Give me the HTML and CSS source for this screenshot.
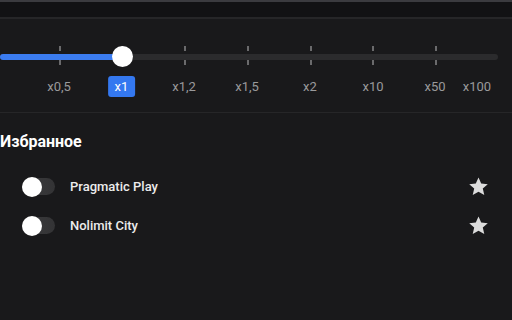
FILE: index.html
```html
<!DOCTYPE html>
<html lang="ru">
<head>
<meta charset="utf-8">
<link rel="stylesheet" href="styles.css">
</head>
<body>
<div class="topbar"></div>
<section class="speed">
  <div class="slider">
    <div class="track"><div class="fill"></div></div>
    <span class="tick" style="left:60px"></span>
    <span class="tick" style="left:122px"></span>
    <span class="tick" style="left:185px"></span>
    <span class="tick" style="left:248px"></span>
    <span class="tick" style="left:311px"></span>
    <span class="tick" style="left:373px"></span>
    <span class="tick" style="left:436px"></span>
    <div class="thumb"></div>
  </div>
  <div class="labels">
    <span class="lbl" style="left:59px">x0,5</span>
    <span class="lbl active" style="left:121.5px">x1</span>
    <span class="lbl" style="left:184px">x1,2</span>
    <span class="lbl" style="left:247px">x1,5</span>
    <span class="lbl" style="left:310px">x2</span>
    <span class="lbl" style="left:373px">x10</span>
    <span class="lbl" style="left:435px">x50</span>
    <span class="lbl" style="left:477px">x100</span>
  </div>
</section>
<section class="fav">
  <h2 class="title">Избранное</h2>
  <ul class="list">
    <li class="row">
      <span class="toggle"><span class="knob"></span></span>
      <span class="name">Pragmatic Play</span>
      <svg class="star" viewBox="0 0 24 24"><path d="M12 1.8l3.1 6.9 7.5.7-5.7 5 1.7 7.4L12 17.9l-6.6 3.9 1.7-7.4-5.7-5 7.5-.7z"/></svg>
    </li>
    <li class="row">
      <span class="toggle"><span class="knob"></span></span>
      <span class="name">Nolimit City</span>
      <svg class="star" viewBox="0 0 24 24"><path d="M12 1.8l3.1 6.9 7.5.7-5.7 5 1.7 7.4L12 17.9l-6.6 3.9 1.7-7.4-5.7-5 7.5-.7z"/></svg>
    </li>
  </ul>
</section>
</body>
</html>
```
FILE: styles.css
```css
* { box-sizing: border-box; }
html, body {
  margin: 0;
  padding: 0;
  width: 512px;
  height: 320px;
  overflow: hidden;
  background: #19191b;
  font-family: Roboto, "Noto Sans", sans-serif;
  color: #fff;
}
.topbar {
  height: 19px;
  background: #121214;
  border-top: 2px solid #3b3b3f;
  border-bottom: 2px solid #262628;
}
.speed {
  height: 94px;
  border-bottom: 1px solid #262628;
  padding-top: 27px;
}
.slider {
  position: relative;
  height: 21px;
  width: 498px;
}
.track {
  position: absolute;
  left: 0;
  right: 0;
  top: 8px;
  height: 6px;
  border-radius: 3px;
  background: #2b2b2d;
  overflow: hidden;
}
.fill {
  width: 122px;
  height: 100%;
  background: #3b7cf0;
}
.tick {
  position: absolute;
  top: 0;
  width: 1.5px;
  height: 21px;
  margin-left: -0.75px;
  background: linear-gradient(#6a6a6c 0, #6a6a6c 5px, transparent 5px, transparent 14px, #6a6a6c 14px, #6a6a6c 19px, transparent 19px);
}
.thumb {
  position: absolute;
  left: 111.5px;
  top: 0;
  width: 21px;
  height: 21px;
  border-radius: 50%;
  background: #fff;
}
.labels {
  position: relative;
  height: 21px;
  margin-top: 9px;
}
.lbl {
  position: absolute;
  top: 0;
  transform: translateX(-50%);
  height: 21px;
  line-height: 21px;
  font-size: 13px;
  color: #9a9a9c;
  white-space: nowrap;
}
.active {
  background: #3478f0;
  color: #fff;
  border-radius: 3px;
  padding: 0 7px;
}
.fav {
  padding-top: 19px;
}
.title {
  margin: 0;
  padding-left: 0;
  font-size: 16px;
  font-weight: 700;
  line-height: 20px;
  color: #fff;
}
.list {
  list-style: none;
  margin: 15px 0 0;
  padding: 0 23px 0 22px;
}
.row {
  display: flex;
  align-items: center;
  height: 39px;
}
.toggle {
  position: relative;
  width: 33px;
  height: 17px;
  border-radius: 9px;
  background: linear-gradient(90deg, #3c3c3e, #333335);
  flex: none;
}
.knob {
  position: absolute;
  left: 0;
  top: -1.5px;
  width: 20px;
  height: 20px;
  border-radius: 50%;
  background: #fff;
}
.name {
  margin-left: 15px;
  font-size: 13px;
  font-weight: 500;
  color: #ececec;
  flex: 1;
}
.star {
  width: 21px;
  height: 21px;
  fill: #dcdcdc;
  flex: none;
}
```
